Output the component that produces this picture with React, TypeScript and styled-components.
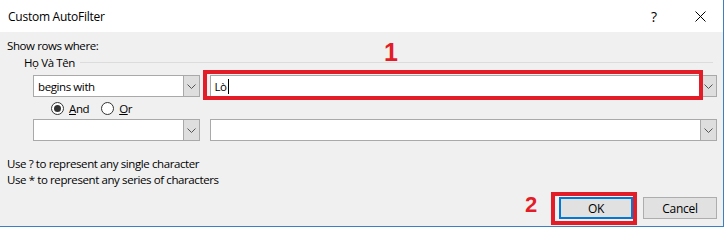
import styled, { createGlobalStyle } from "styled-components";

const colors = {
  face: "#f0f0f0",
  title: "#ffffff",
  text: "#000000",
  fieldBorder: "#a9a9a9",
  buttonFace: "#e1e1e1",
  buttonBorder: "#adadad",
  focus: "#0078d7",
  frame: "#3d7fbf",
  mark: "#e31d28",
  rule: "#dcdcdc",
};

const GlobalStyle = createGlobalStyle`
  html, body {
    margin: 0;
    padding: 0;
    background: #ffffff;
  }
  body {
    font-family: "Open Sans", "Noto Sans", "Liberation Sans", sans-serif;
    font-size: 11.5px;
    letter-spacing: -0.4px;
    color: ${colors.text};
  }
`;

const Page = styled.div`
  width: 726px;
  height: 228px;
  overflow: hidden;
  background: #ffffff;
`;

const Dialog = styled.div`
  position: relative;
  width: 724px;
  height: 227px;
  box-sizing: border-box;
  border-right: 1px solid ${colors.frame};
  border-bottom: 1px solid ${colors.frame};
  display: flex;
  flex-direction: column;
  background: ${colors.face};
`;

const TitleBar = styled.div`
  height: 32px;
  flex: none;
  display: flex;
  align-items: center;
  padding-left: 8px;
  background: ${colors.title};
`;

const Title = styled.span`
  flex: 1;
  font-size: 12px;
  letter-spacing: -0.25px;
`;

const TitleButton = styled.span`
  width: 46px;
  height: 32px;
  display: flex;
  align-items: center;
  justify-content: center;
  font-size: 14px;
  letter-spacing: 0;
`;

const Body = styled.div`
  flex: 1;
  display: flex;
  flex-direction: column;
  padding: 6px 6px 0 7px;
`;

const Label = styled.div`
  height: 16px;
  line-height: 16px;
  white-space: nowrap;
`;

const GroupHeader = styled.div`
  display: flex;
  align-items: center;
  gap: 5px;
  height: 16px;
  padding-left: 17px;

  &::after {
    content: "";
    flex: 1;
    height: 1px;
    background: ${colors.rule};
    margin-right: 4px;
  }
`;

const CriteriaRow = styled.div<{ $top: number }>`
  display: flex;
  gap: 10px;
  margin-top: ${(p) => p.$top}px;
  padding-left: 26px;
`;

const Combo = styled.div<{ $width: number }>`
  position: relative;
  width: ${(p) => p.$width}px;
  height: 22px;
  box-sizing: border-box;
  border: 1px solid ${colors.fieldBorder};
  background: #ffffff;
  display: flex;
  align-items: stretch;
`;

const ComboText = styled.span`
  flex: 1;
  display: flex;
  align-items: center;
  padding-left: 4px;
`;

const Caret = styled.span`
  display: inline-block;
  width: 1px;
  height: 15px;
  margin-left: 1px;
  background: #000000;
`;

const DropButton = styled.span`
  width: 16px;
  box-sizing: border-box;
  border-left: 1px solid ${colors.fieldBorder};
  background: #dedede;
  display: flex;
  align-items: center;
  justify-content: center;
`;

const RadioRow = styled.div`
  display: flex;
  align-items: center;
  gap: 12px;
  height: 16px;
  margin-top: 3px;
  padding-left: 44px;
`;

const RadioOption = styled.label`
  display: flex;
  align-items: center;
  gap: 5px;
`;

const RadioCircle = styled.span<{ $checked?: boolean }>`
  width: 13px;
  height: 13px;
  box-sizing: border-box;
  border-radius: 50%;
  border: 1px solid #333333;
  background: #ffffff;
  display: flex;
  align-items: center;
  justify-content: center;

  &::after {
    content: "";
    width: 7px;
    height: 7px;
    border-radius: 50%;
    background: #333333;
    display: ${(p) => (p.$checked ? "block" : "none")};
  }
`;

const Hints = styled.div`
  margin-top: 15px;
`;

const ButtonRow = styled.div`
  display: flex;
  justify-content: flex-end;
  gap: 10px;
  margin-top: 9px;
`;

const Button = styled.button<{ $default?: boolean }>`
  position: relative;
  width: 74px;
  height: 22px;
  box-sizing: border-box;
  font: inherit;
  font-size: 12px;
  letter-spacing: -0.25px;
  color: #000000;
  background: ${colors.buttonFace};
  border: ${(p) =>
    p.$default ? `2px solid ${colors.focus}` : `1px solid ${colors.buttonBorder}`};
  padding: 0;
`;

const Highlight = styled.span<{ $l: number; $r: number; $t: number; $b: number }>`
  position: absolute;
  left: ${(p) => p.$l}px;
  right: ${(p) => p.$r}px;
  top: ${(p) => p.$t}px;
  bottom: ${(p) => p.$b}px;
  border: 4px solid ${colors.mark};
  pointer-events: none;
`;

const StepNumber = styled.span<{ $x: number; $y: number; $size: number }>`
  position: absolute;
  left: ${(p) => p.$x}px;
  top: ${(p) => p.$y}px;
  font-family: "Liberation Sans", Arial, sans-serif;
  font-weight: bold;
  font-size: ${(p) => p.$size}px;
  letter-spacing: 0;
  line-height: 1;
  color: ${colors.mark};
`;

const Chevron = () => (
  <svg width="9" height="5" viewBox="0 0 9 5">
    <path d="M0.5 0.5 L4.5 4.5 L8.5 0.5" fill="none" stroke="#555" strokeWidth="1" />
  </svg>
);

const CloseIcon = () => (
  <svg width="11" height="11" viewBox="0 0 11 11">
    <path d="M0.5 0.5 L10.5 10.5 M10.5 0.5 L0.5 10.5" stroke="#000" strokeWidth="1" />
  </svg>
);

const Underline = styled.span`
  text-decoration: underline;
`;

export default function App() {
  return (
    <Page>
      <GlobalStyle />
      <Dialog>
        <TitleBar>
          <Title>Custom AutoFilter</Title>
          <TitleButton>?</TitleButton>
          <TitleButton>
            <CloseIcon />
          </TitleButton>
        </TitleBar>
        <Body>
          <Label>Show rows where:</Label>
          <GroupHeader>Họ Và Tên</GroupHeader>
          <CriteriaRow $top={5}>
            <Combo $width={167}>
              <ComboText>begins with</ComboText>
              <DropButton>
                <Chevron />
              </DropButton>
            </Combo>
            <Combo $width={509}>
              <ComboText>
                Lò
                <Caret />
              </ComboText>
              <DropButton>
                <Chevron />
              </DropButton>
              <Highlight $l={-8} $r={13} $t={-6} $b={-4} />
            </Combo>
          </CriteriaRow>
          <RadioRow>
            <RadioOption>
              <RadioCircle $checked />
              <span>
                <Underline>A</Underline>nd
              </span>
            </RadioOption>
            <RadioOption>
              <RadioCircle />
              <span>
                <Underline>O</Underline>r
              </span>
            </RadioOption>
          </RadioRow>
          <CriteriaRow $top={3}>
            <Combo $width={167}>
              <ComboText />
              <DropButton>
                <Chevron />
              </DropButton>
            </Combo>
            <Combo $width={509}>
              <ComboText />
              <DropButton>
                <Chevron />
              </DropButton>
            </Combo>
          </CriteriaRow>
          <Hints>
            <Label>Use ? to represent any single character</Label>
            <Label>Use * to represent any series of characters</Label>
          </Hints>
          <ButtonRow>
            <Button $default>
              OK
              <Highlight $l={-10} $r={-6} $t={-7} $b={-8} />
            </Button>
            <Button>Cancel</Button>
          </ButtonRow>
        </Body>
        <StepNumber $x={384} $y={40} $size={25}>
          1
        </StepNumber>
        <StepNumber $x={525} $y={194} $size={22}>
          2
        </StepNumber>
      </Dialog>
    </Page>
  );
}
